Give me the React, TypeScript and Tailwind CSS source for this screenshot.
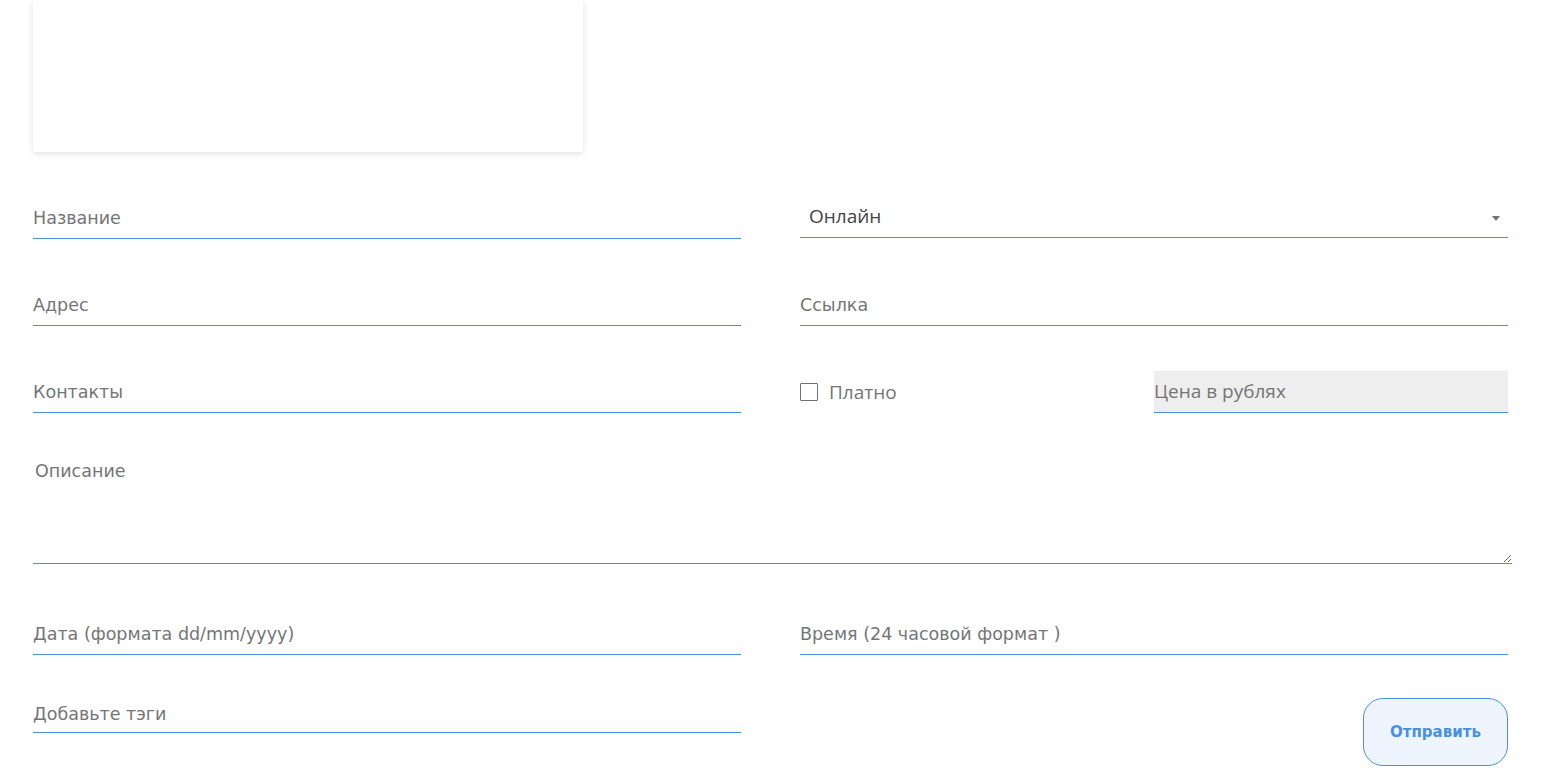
import { useState } from "react";

const sans = "font-['DejaVu_Sans','Liberation_Sans',sans-serif]";
const open = "font-['Open_Sans','Noto_Sans',sans-serif]";

const inputCls = `w-full h-[42px] bg-transparent border-0 border-b border-[#4a90e2] outline-none text-[17.5px] text-[#333] placeholder:text-[#757575] ${sans}`;

function Field({ placeholder }: { placeholder: string }) {
  return <input type="text" placeholder={placeholder} className={inputCls} />;
}

export default function App() {
  const [mode, setMode] = useState("online");
  const [paid, setPaid] = useState(false);

  return (
    <div className="min-h-screen bg-white px-[33px] pb-[8px]">
      {/* Image preview card */}
      <div className="w-[550px] h-[152px] bg-white shadow-[0_2px_6px_rgba(0,0,0,0.12)]" />

      <form
        className="mt-[45px] w-[1475px]"
        onSubmit={(e) => e.preventDefault()}
      >
        <div className="grid grid-cols-2 gap-x-[59px] gap-y-[45px]">
          <Field placeholder="Название" />
          <div className="relative">
            <select
              value={mode}
              onChange={(e) => setMode(e.target.value)}
              className={`w-full h-[41px] appearance-none bg-transparent border-0 border-b border-[#4a90e2] outline-none pl-[9px] pb-[2px] text-[19px] text-[#444] ${open}`}
            >
              <option value="online">Онлайн</option>
              <option value="offline">Офлайн</option>
            </select>
            <span className="pointer-events-none absolute right-[8px] top-[19px] w-0 h-0 border-l-[4px] border-r-[4px] border-t-[5px] border-l-transparent border-r-transparent border-t-[#757575]" />
          </div>

          <Field placeholder="Адрес" />
          <Field placeholder="Ссылка" />

          <Field placeholder="Контакты" />
          <div className="grid grid-cols-2">
            <label className="flex items-center gap-[11px] h-[42px] cursor-pointer">
              <span
                onClick={() => setPaid(!paid)}
                className={`w-[18px] h-[18px] border-[1.5px] border-[#6f6f6f] rounded-[1px] ${paid ? "bg-[#4a90e2]" : "bg-white"}`}
              />
              <span className={`text-[19px] text-[#757575] ${open}`}>Платно</span>
            </label>
            <input
              type="text"
              placeholder="Цена в рублях"
              className={`w-full h-[42px] bg-[#eeeeee] border-0 border-b border-[#4a90e2] outline-none pb-[2px] text-[19px] text-[#333] placeholder:text-[#757575] ${open}`}
            />
          </div>
        </div>

        <textarea
          placeholder="Описание"
          className={`block mt-[41px] w-[1479px] h-[110px] pt-[4px] px-[2px] bg-transparent border-0 border-b border-[#4a90e2] outline-none text-[17.5px] text-[#333] placeholder:text-[#757575] ${sans}`}
        />

        <div className="grid grid-cols-2 gap-x-[59px] mt-[49px]">
          <Field placeholder="Дата (формата dd/mm/yyyy)" />
          <Field placeholder="Время (24 часовой формат )" />
        </div>

        <div className="grid grid-cols-2 gap-x-[59px] mt-[37px]">
          <input
            type="text"
            placeholder="Добавьте тэги"
            className={`w-full h-[41px] pt-[3px] bg-transparent border-0 border-b border-[#4a90e2] outline-none text-[17.5px] text-[#333] placeholder:text-[#757575] ${sans}`}
          />
          <div className="flex justify-end pt-[6px]">
            <button
              type="submit"
              className={`w-[145px] h-[68px] rounded-[20px] border border-[#4a90e2] bg-[#eff5ff] text-[#4a90e2] text-[15px] font-bold ${sans}`}
            >
              Отправить
            </button>
          </div>
        </div>
      </form>
    </div>
  );
}
